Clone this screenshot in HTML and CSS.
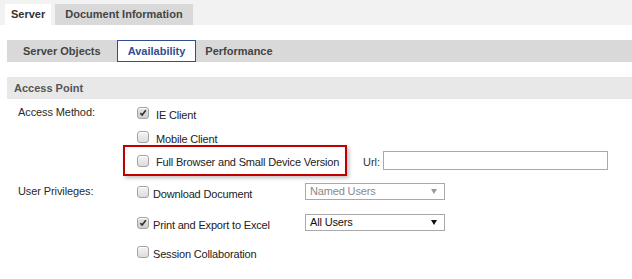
FILE: index.html
```html
<!DOCTYPE html>
<html>
    <head>
        <title>Server - Availability</title>
        <link rel="stylesheet" href="styles.css">
    </head>
    <body>
        <div class="top-tabs">
            <div class="top-tab active">Server</div>
            <div class="top-tab">Document Information</div>
        </div>

        <div class="sub-tabs">
            <div class="sub-tab">Server Objects</div>
            <div class="sub-tab active">Availability</div>
            <div class="sub-tab">Performance</div>
        </div>

        <div class="section-title">Access Point</div>

        <!-- Access method -->
        <div class="field-group access">
            <div class="field-label">Access Method:</div>
            <div class="field-options">
                <div class="option">
                    <span class="check checked"><svg viewBox="0 0 12 12"><path d="M2.8 6.2 L5 8.4 L9.4 2.8"/></svg></span>
                    <span class="option-text">IE Client</span>
                </div>
                <div class="option">
                    <span class="check"></span>
                    <span class="option-text">Mobile Client</span>
                </div>
                <div class="option url-row">
                    <div class="highlight">
                        <span class="check"></span>
                        <span class="option-text">Full Browser and Small Device Version</span>
                    </div>
                    <label class="url-label" for="url">Url:</label>
                    <input class="url-input" type="text" id="url">
                </div>
            </div>
        </div>

        <!-- User privileges -->
        <div class="field-group privileges">
            <div class="field-label">User Privileges:</div>
            <div class="field-options">
                <div class="option with-select">
                    <div class="option-box">
                        <span class="check"></span>
                        <span class="option-text">Download Document</span>
                    </div>
                    <div class="dropdown disabled">Named Users<span class="arrow"></span></div>
                </div>
                <div class="option with-select">
                    <div class="option-box">
                        <span class="check checked"><svg viewBox="0 0 12 12"><path d="M2.8 6.2 L5 8.4 L9.4 2.8"/></svg></span>
                        <span class="option-text">Print and Export to Excel</span>
                    </div>
                    <div class="dropdown">All Users<span class="arrow"></span></div>
                </div>
                <div class="option last">
                    <div class="option-box">
                        <span class="check"></span>
                        <span class="option-text">Session Collaboration</span>
                    </div>
                </div>
            </div>
        </div>
    </body>
</html>
```

FILE: styles.css
```css
body {
    font-family: "Liberation Sans", Arial, sans-serif;
    font-size: 11px;
    color: #222;
    background-color: #fff;
    margin: 0;
    padding: 0;
}

/* top level tabs */
.top-tabs {
    display: flex;
    gap: 4px;
    height: 25px;
    padding: 4px 0 0 5px;
    box-sizing: border-box;
    background-color: #f2f2f2;
}

.top-tab {
    height: 21px;
    line-height: 21px;
    padding: 0 10px;
    font-weight: bold;
    color: #444;
    background-color: #d9d9d9;
}

.top-tab.active {
    padding: 0 6px;
    color: #333;
    background-color: #fff;
}

/* second level tabs */
.sub-tabs {
    display: flex;
    height: 22px;
    margin: 15px 0 0 7px;
    background-color: #d9d9d9;
}

.sub-tab {
    line-height: 22px;
    padding: 0 16px;
    font-weight: bold;
    color: #444;
}

.sub-tab.active {
    padding: 0 10px;
    line-height: 20px;
    color: #2f4f8f;
    background-color: #fff;
    border: 1px solid #2f4f8f;
}

.sub-tab.active + .sub-tab {
    padding-left: 9px;
}

.section-title {
    height: 22px;
    line-height: 22px;
    margin: 15px 0 0 7px;
    padding-left: 7px;
    font-weight: bold;
    color: #555;
    background-color: #e8e8e8;
}

/* form rows */
.field-group {
    display: flex;
    padding-left: 18px;
}

.field-group.access {
    margin-top: 2px;
}

.field-label {
    width: 119px;
    flex-shrink: 0;
    color: #2a2a2a;
    letter-spacing: -0.1px;
}

.access .field-label {
    line-height: 22px;
}

.privileges .field-label {
    line-height: 31px;
}

.field-options {
    display: flex;
    flex-direction: column;
}

.option {
    display: flex;
    align-items: center;
    height: 24px;
}

.option-text {
    margin-top: 3px;
    white-space: nowrap;
    letter-spacing: -0.17px;
}

.check {
    width: 12px;
    height: 12px;
    box-sizing: border-box;
    flex-shrink: 0;
    margin-right: 7px;
    border: 1px solid #a3a3a3;
    border-radius: 3px;
    background: linear-gradient(#f4f4f4, #dcdcdc);
    box-shadow: inset 0 1px 0 #fff;
}

.check.checked {
    background: linear-gradient(#e4e4e4, #cfcfcf);
}

.check svg {
    display: block;
    width: 10px;
    height: 10px;
    fill: none;
    stroke: #333;
    stroke-width: 2;
}

/* highlighted option with the url field */
.url-row {
    height: auto;
    margin-top: -4px;
}

.highlight {
    display: flex;
    align-items: center;
    width: 224px;
    height: 31px;
    box-sizing: border-box;
    margin-left: -14px;
    padding-left: 12px;
    border: 2px solid #c00000;
    box-shadow: 2px 2px 4px rgba(0, 0, 0, 0.25);
}

.url-label {
    margin: 2px 3px 0 16px;
    color: #333;
}

.url-input {
    width: 225px;
    height: 19px;
    box-sizing: border-box;
    margin: 0;
    border: 1px solid #a9a9a9;
    border-radius: 0;
    padding: 0 3px;
    font: inherit;
}

.privileges .check {
    margin-right: 4px;
}

.privileges .option-text {
    margin-top: 4px;
}

.option.with-select {
    height: 31px;
}

.option.last {
    height: 28px;
}

.option-box {
    display: flex;
    align-items: center;
    width: 168px;
}

.dropdown {
    position: relative;
    width: 140px;
    height: 17px;
    line-height: 15px;
    box-sizing: border-box;
    padding-left: 4px;
    border: 1px solid #a9a9a9;
    color: #111;
    background-color: #fff;
    letter-spacing: -0.15px;
}

.dropdown.disabled {
    color: #8a8a8a;
}

.arrow {
    position: absolute;
    right: 7px;
    top: 5px;
    width: 0;
    height: 0;
    border-left: 3px solid transparent;
    border-right: 3px solid transparent;
    border-top: 5px solid #111;
}

.dropdown.disabled .arrow {
    border-top-color: #9a9a9a;
}
```
